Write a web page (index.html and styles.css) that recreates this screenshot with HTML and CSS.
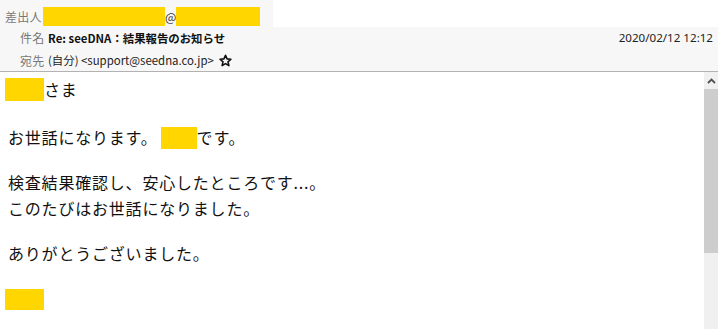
FILE: index.html
```html
<!DOCTYPE html>
<html lang="ja">
<head>
<meta charset="utf-8">
<link rel="stylesheet" href="styles.css">
</head>
<body>
<div class="mail">
  <div class="header">
    <div class="from-row">
      <div class="from-cell">
        <span class="label">差出人</span>
        <span class="mask mask-user"></span>
        <span class="at">@</span>
        <span class="mask mask-domain"></span>
      </div>
      <div class="from-blank"></div>
    </div>
    <div class="row row-subject">
      <span class="label label-ind">件名</span>
      <span class="subject">Re: seeDNA：結果報告のお知らせ</span>
      <span class="date">2020/02/12 12:12</span>
    </div>
    <div class="row row-to">
      <span class="label label-ind">宛先</span>
      <span class="to">(自分) &lt;support@seedna.co.jp&gt;</span>
      <svg class="star" width="13" height="13" viewBox="0 0 24 24"><path d="M12 2.5l2.9 6.6 7.1.6-5.4 4.7 1.6 7-6.2-3.7-6.2 3.7 1.6-7L2 9.7l7.1-.6z" fill="none" stroke="#111" stroke-width="3" stroke-linejoin="round"/></svg>
    </div>
  </div>
  <div class="content">
    <div class="body">
      <p class="para para-first"><span class="mask mask-name"></span>さま</p>
      <p class="para">お世話になります。<span class="mask mask-sender"></span>です。</p>
      <p class="para">検査結果確認し、安心したところです...。<br>このたびはお世話になりました。</p>
      <p class="para">ありがとうございました。</p>
      <p class="para"><span class="mask mask-sign"></span></p>
    </div>
    <div class="scrollbar">
      <div class="sb-up"><svg width="9" height="6" viewBox="0 0 9 6"><path d="M1 5L4.5 1.5 8 5" fill="none" stroke="#505050" stroke-width="1.8"/></svg></div>
      <div class="sb-thumb"></div>
      <div class="sb-track"></div>
    </div>
  </div>
</div>
</body>
</html>
```

FILE: styles.css
```css
html, body {
  margin: 0;
  padding: 0;
  background: #ffffff;
}
body {
  width: 718px;
  height: 329px;
  overflow: hidden;
  font-family: "Noto Sans CJK JP", "Noto Sans", sans-serif;
  color: #111;
}
.mail {
  display: flex;
  flex-direction: column;
  height: 329px;
}
.header {
  background: #f7f7f7;
  border-bottom: 1px solid #b2b2b2;
  height: 71px;
  font-size: 12px;
}
.from-row {
  display: flex;
  height: 27px;
}
.from-cell {
  width: 268px;
  padding-left: 5px;
  display: flex;
  align-items: flex-end;
  padding-bottom: 1px;
  box-sizing: content-box;
}
.from-blank {
  flex: 1;
  background: #ffffff;
}
.label {
  color: #777;
  line-height: 19px;
  letter-spacing: 0.3px;
}
.mask {
  display: inline-block;
  background: #ffd600;
}
.mask-user {
  width: 122px;
  height: 19px;
  margin-left: 1px;
}
.at {
  width: 11px;
  text-align: center;
  line-height: 19px;
  color: #333;
}
.mask-domain {
  width: 84px;
  height: 19px;
}
.row {
  display: flex;
  align-items: center;
  height: 22px;
  padding-left: 20px;
  padding-right: 5px;
}
.row-subject {
  padding-top: 0;
  height: 21px;
}
.row-to {
  height: 23px;
  padding-top: 1px;
  box-sizing: border-box;
}
.label-ind {
  width: 28px;
  flex: none;
}
.subject {
  font-weight: bold;
  color: #111;
  font-size: 11.4px;
}
.date {
  margin-left: auto;
  color: #222;
  font-family: "Noto Sans", "Noto Sans CJK JP", sans-serif;
  font-size: 11.6px;
}
.to {
  color: #222;
  font-size: 11.4px;
}
.star {
  margin-left: 5px;
}
.content {
  flex: 1;
  display: flex;
  min-height: 0;
}
.body {
  flex: 1;
  padding: 4px 0 0 8px;
  font-size: 16px;
  letter-spacing: 0.8px;
}
.para {
  margin: 0 0 19px 0;
  line-height: 26px;
}
.para-first {
  margin-bottom: 22px;
}
.mask-name {
  width: 39px;
  height: 23px;
  margin-left: -3px;
  margin-right: 0;
  vertical-align: -5px;
}
.mask-sender {
  width: 36px;
  height: 22px;
  margin-left: 3px;
  vertical-align: -5px;
}
.mask-sign {
  width: 39px;
  height: 21px;
  margin-left: -3px;
  vertical-align: -5px;
}
.scrollbar {
  width: 14px;
  display: flex;
  flex-direction: column;
  background: #f0f0f0;
}
.sb-up {
  height: 17px;
  display: flex;
  align-items: center;
  justify-content: center;
  background: #f0f0f0;
}
.sb-thumb {
  height: 164px;
  background: #cdcdcd;
}
.sb-track {
  flex: 1;
}
```
